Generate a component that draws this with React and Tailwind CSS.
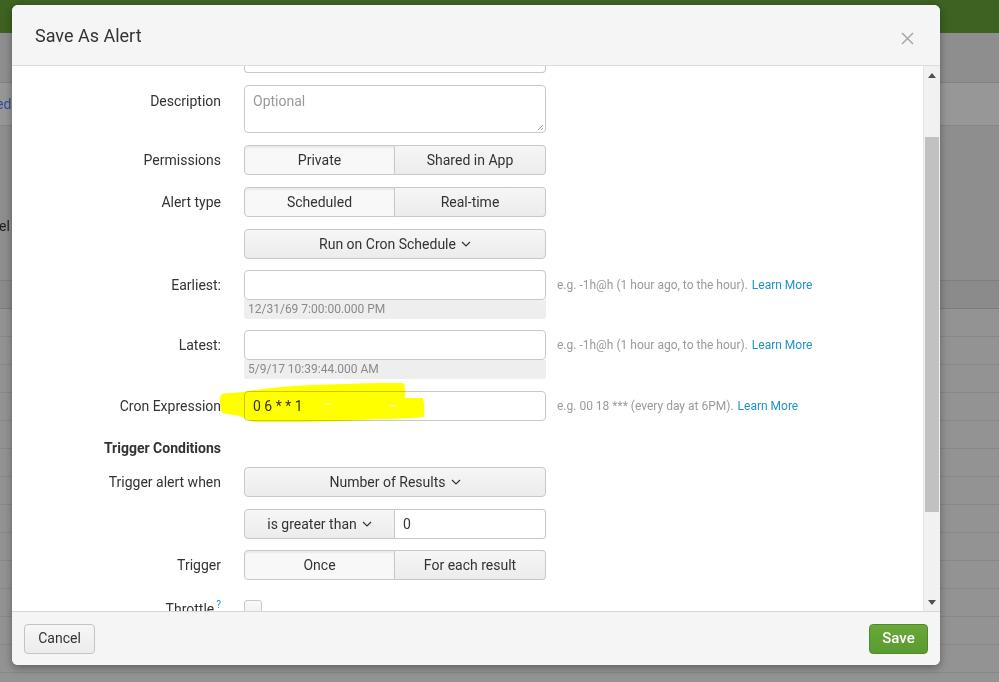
import React from "react";

const Caret = () => (
  <svg width="10" height="6" viewBox="0 0 10 6" className="ml-[5px] inline-block">
    <path d="M1 1 L5 5 L9 1" fill="none" stroke="#333" strokeWidth="1.2" />
  </svg>
);

const Label = ({ children, className = "" }) => (
  <div className={"w-[209px] shrink-0 text-right text-[14px] text-[#333] " + className}>{children}</div>
);

const btnBase =
  "h-[30px] flex items-center justify-center text-[14px] text-[#333] border border-[#c8c8c8]";

const Seg = ({ a, b }) => (
  <div className="flex w-[302px] ml-[23px]">
    <div className={btnBase + " w-[151px] rounded-l-[4px] bg-[#f8f8f8] shadow-[inset_0_2px_2px_rgba(0,0,0,0.06)]"}>{a}</div>
    <div className={btnBase + " w-[151px] rounded-r-[4px] border-l-0 bg-gradient-to-b from-[#f6f6f6] to-[#ececec]"}>{b}</div>
  </div>
);

const Drop = ({ children }) => (
  <div className={btnBase + " w-[302px] ml-[23px] rounded-[4px] bg-gradient-to-b from-[#f6f6f6] to-[#ececec]"}>
    {children}
    <Caret />
  </div>
);

const Hint = ({ children }) => (
  <div className="ml-[11px] h-[30px] flex items-center text-[12px] text-[#9a9a9a] whitespace-nowrap">
    {children}
    <span className="ml-[4px] text-[#1e93c6]">Learn More</span>
  </div>
);

const TimeRow = ({ label, date, className }) => (
  <div className={"flex items-start " + className}>
    <Label className="h-[30px] flex items-center justify-end">{label}</Label>
    <div className="ml-[23px] w-[302px] flex flex-col">
      <div className="h-[30px] border border-[#c8c8c8] rounded-[4px] bg-white" />
      <div className="h-[19px] bg-[#eeeeee] rounded-b-[3px] text-[12px] text-[#8a8a8a] pl-[4px] leading-[19px]">{date}</div>
    </div>
    <Hint>e.g. -1h@h (1 hour ago, to the hour).</Hint>
  </div>
);

export default function App() {
  const bgRows = Array.from({ length: 13 });
  return (
    <div className="relative w-[999px] h-[682px] overflow-hidden font-[family-name:Roboto,'Liberation_Sans',sans-serif]">
      {/* dimmed page background */}
      <div className="flex flex-col w-full h-full bg-[#939393]">
        <div className="h-[33px] bg-[#3d6221] shrink-0" />
        <div className="h-[50px] bg-[#8e8e8e] border-b border-[#828282] shrink-0" />
        <div className="h-[43px] bg-[#979797] border-b border-[#858585] shrink-0 flex items-center text-[14px] text-[#2c4c9a] -ml-[4px]">ed</div>
        <div className="h-[155px] bg-[#8e8e8e] border-b border-[#7e7e7e] shrink-0 flex items-start pt-[90px] text-[14px] text-[#1f1f1f] -ml-[1px]">el</div>
        <div className="h-[28px] bg-[#8b8b8b] border-b border-[#7c7c7c] shrink-0" />
        {bgRows.map((_, i) => (
          <div key={i} className="h-[28px] bg-[#939393] border-b border-[#888888] shrink-0" />
        ))}
      </div>

      {/* modal */}
      <div className="absolute left-[12px] top-[5px] w-[928px] h-[660px] rounded-[6px] bg-white shadow-[0_3px_9px_rgba(0,0,0,0.35)] flex flex-col overflow-hidden">
        <div className="h-[61px] shrink-0 bg-[#f5f5f5] border-b border-[#dcdcdc] flex items-center justify-between pl-[23px] pr-[26px]">
          <div className="text-[18px] text-[#333]">Save As Alert</div>
          <svg width="13" height="13" viewBox="0 0 13 13" className="mt-[6px]">
            <path d="M1 1 L12 12 M12 1 L1 12" stroke="#a8a8a8" strokeWidth="1.5" />
          </svg>
        </div>

        <div className="flex-1 flex min-h-0">
          <div className="relative flex-1 overflow-hidden">
            {/* partial title input */}
            <div className="ml-[232px] w-[302px] h-[7px] border-x border-b border-[#c8c8c8] rounded-b-[4px]" />

            <div className="flex items-start mt-[12px]">
              <Label className="pt-[6px]">Description</Label>
              <div className="relative ml-[23px] w-[302px] h-[48px] border border-[#c8c8c8] rounded-[4px] text-[14px] text-[#9a9a9a] pl-[8px] pt-[5px]">
                Optional
                <svg width="7" height="7" viewBox="0 0 7 7" className="absolute right-[1px] bottom-[1px]">
                  <path d="M6 1 L1 6 M6 4 L4 6" stroke="#888" strokeWidth="0.8" />
                </svg>
              </div>
            </div>

            <div className="flex items-center mt-[12px]">
              <Label>Permissions</Label>
              <Seg a="Private" b="Shared in App" />
            </div>

            <div className="flex items-center mt-[12px]">
              <Label>Alert type</Label>
              <Seg a="Scheduled" b="Real-time" />
            </div>

            <div className="flex items-center mt-[12px]">
              <Label></Label>
              <Drop>Run on Cron Schedule</Drop>
            </div>

            <TimeRow className="mt-[11px]" label="Earliest:" date="12/31/69 7:00:00.000 PM" />
            <TimeRow className="mt-[11px]" label="Latest:" date="5/9/17 10:39:44.000 AM" />

            <div className="flex items-center mt-[12px]">
              <Label>Cron Expression</Label>
              <div className="ml-[23px] w-[302px] h-[30px] border border-[#c8c8c8] rounded-[4px] flex items-center pl-[8px] text-[14px] text-[#333]">
                0 6 * * 1
              </div>
              <Hint>e.g. 00 18 *** (every day at 6PM).</Hint>
            </div>

            <div className="flex items-center mt-[17px] h-[20px]">
              <Label className="font-bold">Trigger Conditions</Label>
            </div>

            <div className="flex items-center mt-[9px]">
              <Label>Trigger alert when</Label>
              <Drop>Number of Results</Drop>
            </div>

            <div className="flex items-center mt-[12px]">
              <Label></Label>
              <div className="flex w-[302px] ml-[23px]">
                <div className={btnBase + " w-[151px] rounded-l-[4px] bg-gradient-to-b from-[#f6f6f6] to-[#ececec]"}>
                  is greater than
                  <Caret />
                </div>
                <div className="w-[151px] h-[30px] border border-l-0 border-[#c8c8c8] rounded-r-[4px] flex items-center pl-[8px] text-[14px] text-[#333]">
                  0
                </div>
              </div>
            </div>

            <div className="flex items-center mt-[11px]">
              <Label>Trigger</Label>
              <Seg a="Once" b="For each result" />
            </div>

            <div className="flex items-start mt-[20px]">
              <Label className="leading-[18px] pt-[0px]">
                Throttle<span className="relative -top-[6px] ml-[2px] text-[10px] text-[#1e93c6]">?</span>
              </Label>
              <div className="ml-[23px] w-[18px] h-[18px] border border-[#c8c8c8] rounded-[3px] bg-gradient-to-b from-[#fafafa] to-[#eeeeee]" />
            </div>

            {/* yellow marker highlight */}
            <svg
              width="220"
              height="50"
              viewBox="0 0 220 50"
              className="absolute left-[198px] top-[309px] mix-blend-multiply pointer-events-none"
            >
              <path
                d="M10 22 Q10 18 20 18 L33 17 Q60 12 100 10 L167 8 L193 8 Q196 10 195 23 L213 23 Q215 30 214 42 Q190 44 170 44 Q120 47 90 47 L43 47 Q35 44 30 41 L12 38 Q9 30 10 22 Z"
                fill="#ffff00"
              />
              <rect x="115" y="28" width="6" height="1.2" fill="#f2f2c8" />
              <rect x="180" y="30" width="7" height="1.2" fill="#f2f2c8" />
            </svg>
          </div>

          {/* scrollbar */}
          <div className="w-[17px] shrink-0 bg-[#f1f1f1] border-l border-[#e6e6e6] flex flex-col items-center">
            <svg width="8" height="5" viewBox="0 0 8 5" className="mt-[7px]">
              <path d="M0 5 L4 0 L8 5 Z" fill="#505050" />
            </svg>
            <div className="mt-[59px] w-[14px] h-[375px] bg-[#c1c1c1]" />
            <div className="flex-1" />
            <svg width="8" height="5" viewBox="0 0 8 5" className="mb-[6px]">
              <path d="M0 0 L8 0 L4 5 Z" fill="#505050" />
            </svg>
          </div>
        </div>

        <div className="h-[54px] shrink-0 bg-[#f5f5f5] border-t border-[#d6d6d6] flex items-center justify-between px-[12px]">
          <div className="w-[71px] h-[30px] rounded-[4px] border border-[#c3c3c3] bg-gradient-to-b from-[#f6f6f6] to-[#ececec] flex items-center justify-center text-[14px] text-[#333]">
            Cancel
          </div>
          <div className="w-[59px] h-[30px] rounded-[4px] border border-[#4f8a2a] bg-gradient-to-b from-[#68a93a] to-[#5a9a2f] flex items-center justify-center text-[15px] font-medium text-white">
            Save
          </div>
        </div>
      </div>
    </div>
  );
}
